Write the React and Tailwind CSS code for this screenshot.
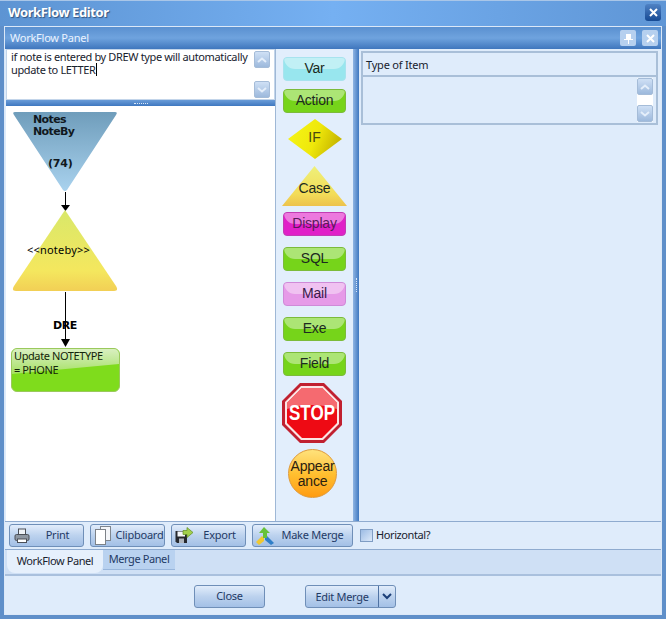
const tahoma = { fontFamily: '"Noto Sans", "DejaVu Sans", sans-serif' };

const GlossBtn = ({ label, tone, textClass = "text-[#1c2a20]", className = "" }) => (
    <div className={`relative w-[63px] h-6 shrink-0 rounded-[4px] overflow-hidden flex items-center justify-center pb-[2px] border ${tone} ${className}`}>
        <div className="absolute left-0 right-0 top-0 h-[11px] rounded-b-[30px] bg-white/40" />
        <span className={`relative font-['Liberation_Sans'] text-[14px] leading-none tracking-[-0.2px] ${textClass}`}>{label}</span>
    </div>
);

const ScrollBtn = ({ down, className = "" }) => (
    <div className={`w-4 h-[17px] rounded-[2px] border border-[#a5bcd8] bg-gradient-to-b from-[#cfe0f5] to-[#9db9dc] flex items-center justify-center ${className}`}>
        <svg width="10" height="6" viewBox="0 0 10 6" className={down ? "rotate-180" : ""}>
            <path d="M1 5 L5 1.5 L9 5" fill="none" stroke="#e4eefa" strokeWidth="2" />
        </svg>
    </div>
);

const ToolBtn = ({ icon, label, className = "", textClass = "" }) => (
    <div className={`h-[23px] rounded-[3px] border border-[#6f8fb8] bg-gradient-to-b from-[#e2edfb] via-[#bcd2ee] to-[#a3c0e6] flex items-center text-[11px] tracking-[-0.25px] text-[#1f3a66] ${className}`} style={tahoma}>
        <span className="w-[24px] flex justify-center shrink-0">{icon}</span>
        <span className={`flex-1 text-center ${textClass}`}>{label}</span>
    </div>
);

const PrintIcon = () => (
    <svg width="16" height="16" viewBox="0 0 16 16">
        <rect x="4.5" y="1" width="7" height="6" fill="#eef2f7" stroke="#4a4f57" />
        <rect x="1" y="6.5" width="14" height="6" rx="1.5" fill="#8e97a2" stroke="#4a4f57" />
        <rect x="3.5" y="11" width="9" height="3.5" fill="#fff" stroke="#4a4f57" />
    </svg>
);
const ClipIcon = () => (
    <svg width="16" height="19" viewBox="0 0 16 19">
        <rect x="5.5" y="0.5" width="10" height="14" fill="#f4f6f9" stroke="#7f868e" />
        <rect x="0.5" y="3.5" width="10" height="15" fill="#fff" stroke="#7d8288" />
    </svg>
);
const ExportIcon = () => (
    <svg width="19" height="17" viewBox="0 0 19 17">
        <path d="M0.5 4 H12 V16 H2 L0.5 14.5 Z" fill="#26282d" />
        <rect x="2.5" y="4.5" width="7.5" height="5" fill="#f4f6f8" />
        <rect x="4" y="11.5" width="5" height="4.5" fill="#aeb4bc" />
        <path d="M8 3.5 H12 V0.5 L18 5.5 L12 10.5 V7.5 H8 Z" fill="#a3d04c" stroke="#5f8e22" strokeWidth="0.7" />
    </svg>
);
const MergeIcon = () => (
    <svg width="20" height="20" viewBox="0 0 20 20">
        <path d="M1 16 L7 10 L9 12 L9 15 L4 19 Z" fill="#f0c830" />
        <path d="M19 17 L16 19 L10 14 L10 10 L12 10 Z" fill="#2f7fc8" />
        <path d="M9 1 L15 7 L12 7 L12 12 L8 12 L8 7 L4 7 Z" fill="#67c23a" />
    </svg>
);

const Canvas = () => (
    <div className="relative flex-1 bg-white" style={tahoma}>
        <svg className="absolute left-[6px] top-[5px]" width="106" height="82" viewBox="0 0 106 82">
            <defs>
                <linearGradient id="noteFill" x1="0" y1="0" x2="0" y2="1">
                    <stop offset="0" stopColor="#6f9dbb" />
                    <stop offset="1" stopColor="#a9d2ee" />
                </linearGradient>
            </defs>
            <path d="M3 1 H103 Q106 1 104 4 L55 79 Q53 81 51 79 L2 4 Q0 1 3 1 Z" fill="url(#noteFill)" />
        </svg>
        <div className="absolute left-[27px] top-[8px] text-[11px] leading-[12px] font-bold text-[#101820] font-['DejaVu_Sans'] tracking-[-0.6px]">Notes<br />NoteBy</div>
        <div className="absolute left-[42px] top-[52px] text-[11px] leading-[12px] font-bold text-[#101820] font-['DejaVu_Sans'] tracking-[-0.2px]">(74)</div>
        <div className="absolute left-[59px] top-[86px] w-px h-[17px] bg-black" />
        <svg className="absolute left-[55px] top-[99px]" width="9" height="6" viewBox="0 0 9 6"><path d="M0 0 H9 L4.5 6 Z" fill="#000" /></svg>
        <svg className="absolute left-[6px] top-[104px]" width="106" height="82" viewBox="0 0 106 82">
            <defs>
                <linearGradient id="caseFill" x1="0" y1="0" x2="0" y2="1">
                    <stop offset="0" stopColor="#d9e86a" />
                    <stop offset="0.75" stopColor="#f4e75e" />
                    <stop offset="1" stopColor="#f2cf55" />
                </linearGradient>
            </defs>
            <path d="M53 0 L104 76 Q107 81 102 81 H4 Q-1 81 2 76 Z" fill="url(#caseFill)" />
        </svg>
        <div className="absolute left-[21px] top-[137px] text-[11px] leading-[14px] text-black tracking-[0.2px]">&lt;&lt;noteby&gt;&gt;</div>
        <div className="absolute left-[59px] top-[186px] w-px h-[50px] bg-black" />
        <svg className="absolute left-[55px] top-[233px]" width="9" height="8" viewBox="0 0 9 8"><path d="M0 0 H9 L4.5 8 Z" fill="#000" /></svg>
        <div className="absolute left-[47px] top-[213px] text-[11px] leading-[14px] font-bold text-black font-['DejaVu_Sans'] tracking-[-0.4px]">DRE</div>
        <div className="absolute left-[5px] top-[242px] w-[109px] h-[44px] rounded-[6px] border border-[#9ac95c] bg-[#7fdc1c] overflow-hidden">
            <div className="absolute inset-0 h-[25px] bg-gradient-to-b from-[#d9efc0] to-[#a5e060] [clip-path:polygon(0_0,100%_0,100%_60%,0_100%)]" />
            <div className="relative pl-[2px] text-[11px] leading-[14px] tracking-[-0.4px] text-[#14240a] whitespace-nowrap">Update NOTETYPE<br />= PHONE</div>
        </div>
    </div>
);

const Palette = () => (
    <div className="w-[78px] shrink-0 bg-[#e2eefc] border-l border-[#9fb8d6] flex flex-col items-center pt-[8px]">
        <GlossBtn label="Var" tone="border-[#a7e3ee] bg-[#98e6ee]" />
        <GlossBtn label="Action" tone="border-[#7cbb3a] bg-[#76d41a]" className="mt-2" />
        <div className="relative w-[54px] h-[40px] shrink-0 mt-[6px] flex items-center justify-center pb-[4px]">
            <svg className="absolute inset-0" width="54" height="40" viewBox="0 0 54 40">
                <defs>
                    <linearGradient id="ifFill" x1="0" y1="0" x2="1" y2="0.3">
                        <stop offset="0" stopColor="#f6f61a" />
                        <stop offset="0.6" stopColor="#efe80a" />
                        <stop offset="1" stopColor="#c9b900" />
                    </linearGradient>
                </defs>
                <path d="M27 0 L54 20 L27 40 L0 20 Z" fill="url(#ifFill)" />
            </svg>
            <span className="relative font-['Liberation_Sans'] text-[14px] text-[#4a4a10]">IF</span>
        </div>
        <div className="relative w-[65px] h-[40px] shrink-0 mt-[7px] flex items-end justify-center pb-[11px]">
            <svg className="absolute inset-0" width="65" height="40" viewBox="0 0 65 40">
                <defs>
                    <linearGradient id="caseBtn" x1="0" y1="0" x2="0" y2="1">
                        <stop offset="0" stopColor="#eef07a" />
                        <stop offset="0.7" stopColor="#f3dc58" />
                        <stop offset="1" stopColor="#edc24c" />
                    </linearGradient>
                </defs>
                <path d="M32.5 0 L65 40 H0 Z" fill="url(#caseBtn)" />
            </svg>
            <span className="relative font-['Liberation_Sans'] text-[14px] leading-none tracking-[-0.2px] text-[#1c2a20]">Case</span>
        </div>
        <GlossBtn label="Display" tone="border-[#c23cb4] bg-[#e020c8]" textClass="text-[#5a1a5a]" className="mt-[6px]" />
        <GlossBtn label="SQL" tone="border-[#7cbb3a] bg-[#76d41a]" className="mt-[11px]" />
        <GlossBtn label="Mail" tone="border-[#cf8ad8] bg-[#e69ae8]" textClass="text-[#3a1a4a]" className="mt-[11px]" />
        <GlossBtn label="Exe" tone="border-[#7cbb3a] bg-[#76d41a]" className="mt-[11px]" />
        <GlossBtn label="Field" tone="border-[#7cbb3a] bg-[#76d41a]" className="mt-[11px]" />
        <div className="relative w-[60px] h-[60px] shrink-0 mt-[7px] -ml-[5px] flex items-center justify-center">
            <svg className="absolute inset-0" width="60" height="60" viewBox="0 0 60 60">
                <path d="M18 0 H42 L60 18 V42 L42 60 H18 L0 42 V18 Z" fill="#c02030" />
                <path d="M19 3 H41 L57 19 V41 L41 57 H19 L3 41 V19 Z" fill="#fbe4e4" />
                <path d="M20 5 H40 L55 20 V40 L40 55 H20 L5 40 V20 Z" fill="#ee0a14" />
                <path d="M20 5 H40 L55 20 V26 Q30 18 5 26 V20 Z" fill="#f56a70" />
            </svg>
            <span className="relative font-['Liberation_Sans'] font-bold text-[17px] leading-none text-white scale-y-[1.25]">STOP</span>
        </div>
        <div className="w-[49px] h-[49px] shrink-0 mt-[6px] -ml-[4px] rounded-full border border-[#e09a3a] bg-gradient-to-b from-[#ffe27a] via-[#ffc030] to-[#ff9c10] flex items-center justify-center text-center font-['Liberation_Sans'] text-[14px] leading-[15px] tracking-[-0.2px] text-[#2a2010]">
            <span>Appear<br />ance</span>
        </div>
    </div>
);

export default function App() {
    return (
        <div className="w-[666px] h-[619px] flex flex-col bg-[#5f8fc9] overflow-hidden" style={tahoma}>
            <div className="h-[26px] shrink-0 flex items-center justify-between pl-[8px] pr-[5px] pb-[2px] border-t border-[#a9c6e8] bg-gradient-to-r from-[#5d94d3] via-[#75b0f2] to-[#5f96d6]">
                <span className="text-[13px] font-bold tracking-[-0.4px] text-white [text-shadow:1px_1px_1px_#33547f]">WorkFlow Editor</span>
                <div className="w-4 h-[17px] rounded-[3px] bg-gradient-to-b from-[#4f82c4] to-[#164a94] flex items-center justify-center text-white">
                    <svg width="9" height="9" viewBox="0 0 9 9"><path d="M1 1 L8 8 M8 1 L1 8" stroke="#fff" strokeWidth="2" /></svg>
                </div>
            </div>
            <div className="flex-1 flex flex-col mx-[4px] mb-[4px] border border-[#dbe8f8] bg-[#dfecfb] min-h-0">
                <div className="h-[22px] shrink-0 flex items-center justify-between pl-[5px] pr-[3px] bg-gradient-to-b from-[#5a90d0] via-[#6fa3de] to-[#3f76bd] text-[11px] tracking-[-0.25px] text-[#eaf3ff]">
                    <span>WorkFlow Panel</span>
                    <div className="flex gap-[6px]">
                        <div className="w-4 h-4 rounded-[2px] bg-[#b6d0ef] flex items-center justify-center">
                            <svg width="9" height="11" viewBox="0 0 9 11"><path d="M2 1 H7 V6 H9 V7 H5 V11 H4 V7 H0 V6 H2 Z" fill="#fff" /></svg>
                        </div>
                        <div className="w-4 h-4 rounded-[2px] bg-[#b6d0ef] flex items-center justify-center">
                            <svg width="9" height="9" viewBox="0 0 9 9"><path d="M1 1 L8 8 M8 1 L1 8" stroke="#fff" strokeWidth="2" /></svg>
                        </div>
                    </div>
                </div>
                <div className="flex-1 flex min-h-0 border-b border-[#8fabcf]">
                    <div className="w-[269px] shrink-0 flex flex-col ml-px">
                        <div className="h-[51px] shrink-0 bg-white flex border border-[#c3d5ea]">
                            <div className="flex-1 pl-[4px] text-[11px] leading-[13px] tracking-[-0.36px] text-[#18222e] whitespace-nowrap">
                                if note is entered by DREW type will automatically<br />update to LETTER<span className="inline-block w-px h-[13px] bg-black align-top" />
                            </div>
                            <div className="w-[20px] flex flex-col justify-between py-px">
                                <ScrollBtn />
                                <ScrollBtn down />
                            </div>
                        </div>
                        <div className="h-[6px] shrink-0 bg-gradient-to-b from-[#6a9cd8] to-[#3f78c0] flex justify-center items-center">
                            <span className="w-[14px] border-t border-dotted border-[#dbe8f8]" />
                        </div>
                        <Canvas />
                    </div>
                    <Palette />
                    <div className="w-[6px] shrink-0 bg-gradient-to-r from-[#8fb5e3] to-[#3f78c0] flex items-center justify-center">
                        <span className="h-[14px] border-l border-dotted border-[#dbe8f8]" />
                    </div>
                    <div className="flex-1 pl-[2px] pr-[3px] pt-[2px]">
                        <div className="h-[74px] flex flex-col border-2 border-[#a9bfd8]">
                            <div className="h-[24px] shrink-0 pl-[3px] pt-[2px] flex items-center text-[11px] tracking-[-0.2px] text-[#18222e] border-b-2 border-[#a9bfd8]">Type of Item</div>
                            <div className="flex-1 flex justify-end pr-[3px] py-px">
                                <div className="w-4 flex flex-col justify-between bg-white">
                                    <ScrollBtn />
                                    <ScrollBtn down />
                                </div>
                            </div>
                        </div>
                    </div>
                </div>
                <div className="h-[28px] shrink-0 flex items-center pl-[4px] border-b border-[#8fabcf] bg-[#dfecfb]">
                    <ToolBtn icon={<PrintIcon />} label="Print" className="w-[75px]" textClass="pr-[2px]" />
                    <ToolBtn icon={<ClipIcon />} label="Clipboard" className="w-[75px] ml-[6px]" />
                    <ToolBtn icon={<ExportIcon />} label="Export" className="w-[75px] ml-[6px]" textClass="pr-[2px]" />
                    <ToolBtn icon={<MergeIcon />} label="Make Merge" className="w-[101px] ml-[6px]" textClass="pr-[4px]" />
                    <div className="w-[13px] h-[13px] ml-[7px] border border-[#7f9dc4] bg-gradient-to-br from-[#9dbce4] to-[#dce9f9]" />
                    <span className="ml-[3px] text-[11px] tracking-[-0.4px] text-[#18222e]">Horizontal?</span>
                </div>
                <div className="h-[26px] shrink-0 flex items-start pl-[2px] border-b-2 border-[#a9c0dd] bg-[#cfe0f5]">
                    <div className="w-[96px] h-[23px] flex items-center justify-center bg-[#e6f0fc] rounded-b-[8px] text-[11px] tracking-[-0.4px] text-[#18222e]">WorkFlow Panel</div>
                    <div className="w-[72px] h-[20px] flex items-center justify-center bg-[#b9d2f0] border-b border-[#98b6dc] text-[11px] tracking-[-0.4px] text-[#1f3a66]">Merge Panel</div>
                </div>
                <div className="h-[38px] shrink-0 flex items-center pl-[189px] pt-[2px]">
                    <div className="w-[71px] h-[23px] rounded-[3px] border border-[#6f8fb8] bg-gradient-to-b from-[#e2edfb] via-[#bcd2ee] to-[#a3c0e6] flex items-center justify-center text-[11px] tracking-[-0.25px] text-[#1f3a66]">Close</div>
                    <div className="w-[91px] h-[23px] ml-[40px] rounded-[3px] border border-[#6f8fb8] bg-gradient-to-b from-[#e2edfb] via-[#bcd2ee] to-[#a3c0e6] flex items-center text-[11px] tracking-[-0.3px] text-[#1f3a66]">
                        <span className="w-[73px] text-center border-r border-[#4f72a3] leading-[21px]">Edit Merge</span>
                        <span className="flex-1 flex justify-center">
                            <svg width="10" height="7" viewBox="0 0 10 7"><path d="M1 1 L5 5 L9 1" fill="none" stroke="#1c3f78" strokeWidth="2" /></svg>
                        </span>
                    </div>
                </div>
            </div>
        </div>
    );
}
